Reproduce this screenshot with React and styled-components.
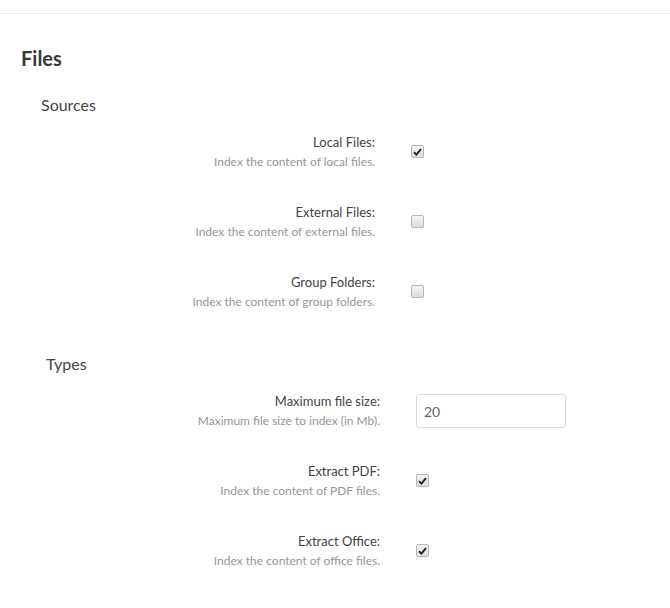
import React from 'react'
import styled, { createGlobalStyle } from 'styled-components'

const GlobalStyle = createGlobalStyle`
  body {
    margin: 0;
    background: #fff;
    font-family: Lato, "Open Sans", sans-serif;
    color: #333;
  }
`

const sources = [
  { label: 'Local Files:', hint: 'Index the content of local files.', checked: true },
  { label: 'External Files:', hint: 'Index the content of external files.', checked: false },
  { label: 'Group Folders:', hint: 'Index the content of group folders.', checked: false },
]

const CheckIcon = () => (
  <svg width="9" height="8" viewBox="0 0 9 8">
    <path d="M1 4.3 L3.4 6.6 L8 1.2" fill="none" stroke="#222" strokeWidth="1.9" />
  </svg>
)

const Checkbox = ({ checked }) => (
  <Box>{checked && <CheckIcon />}</Box>
)

const Setting = ({ label, hint, labelWidth, children }) => (
  <Row $labelWidth={labelWidth}>
    <LabelCol>
      <Label>{label}</Label>
      <Hint>{hint}</Hint>
    </LabelCol>
    {children}
  </Row>
)

const App = () => {
  return (
    <>
      <GlobalStyle />
      <TopBar />
      <Page>
        <Title>Files</Title>
        <SectionTitle $indent={41}>Sources</SectionTitle>
        <Rows>
          {sources.map(s => (
            <Setting key={s.label} label={s.label} hint={s.hint} labelWidth={375}>
              <Checkbox checked={s.checked} />
            </Setting>
          ))}
        </Rows>
        <SectionTitle $indent={46} $top={40}>Types</SectionTitle>
        <Rows>
          <Setting label="Maximum file size:" hint="Maximum file size to index (in Mb)." labelWidth={380}>
            <Input defaultValue="20" />
          </Setting>
          <Setting label="Extract PDF:" hint="Index the content of PDF files." labelWidth={380}>
            <Checkbox checked />
          </Setting>
          <Setting label="Extract Office:" hint="Index the content of office files." labelWidth={380}>
            <Checkbox checked />
          </Setting>
        </Rows>
      </Page>
    </>
  )
}

export default App

const TopBar = styled.div`
  height: 13px;
  border-bottom: 1px solid #ebebeb;
`
const Page = styled.div`
  padding-top: 29px;
  padding-bottom: 30px;
`
const Title = styled.h2`
  margin: 0 0 20px 21px;
  font-size: 20px;
  line-height: 30px;
  font-weight: 700;
  color: #383838;
`
const SectionTitle = styled.h3`
  margin: ${p => p.$top || 0}px 0 15px ${p => p.$indent}px;
  font-size: 16px;
  line-height: 24px;
  font-weight: 400;
  color: #444;
`
const Rows = styled.div`
  display: flex;
  flex-direction: column;
  gap: 30px;
`
const Row = styled.div`
  display: grid;
  grid-template-columns: ${p => p.$labelWidth}px auto;
  column-gap: 36px;
  align-items: center;
  height: 40px;
`
const LabelCol = styled.div`
  text-align: right;
`
const Label = styled.div`
  font-size: 13px;
  line-height: 20px;
  color: #444;
`
const Hint = styled.div`
  font-size: 12px;
  line-height: 20px;
  color: #969696;
`
const Box = styled.span`
  display: inline-flex;
  align-items: center;
  justify-content: center;
  width: 11px;
  height: 11px;
  border: 1px solid #b5b5b5;
  border-radius: 2px;
  background: linear-gradient(#f4f4f4, #dcdcdc);
  margin-top: -1px;
`
const Input = styled.input`
  box-sizing: border-box;
  width: 150px;
  height: 34px;
  padding: 0 7px;
  border: 1px solid #dbdbdb;
  border-radius: 3px;
  font-family: Lato, "Open Sans", sans-serif;
  font-size: 14px;
  color: #666;
  outline: none;
`
